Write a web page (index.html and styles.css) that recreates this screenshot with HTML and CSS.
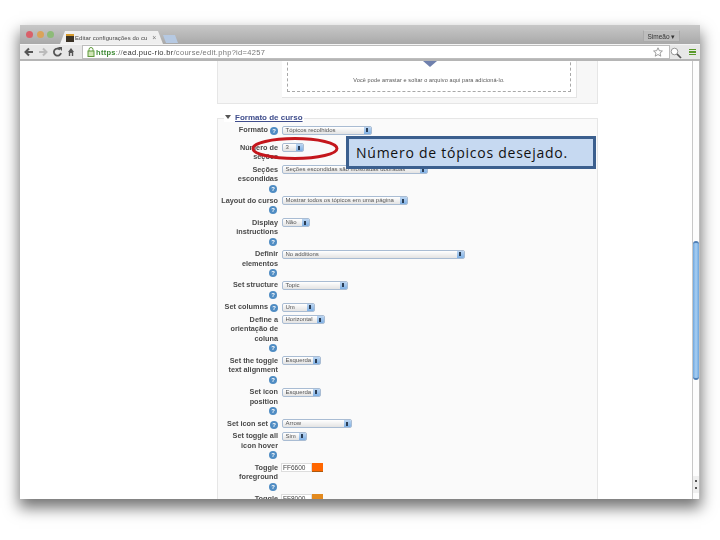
FILE: index.html
```html
<!DOCTYPE html>
<html lang="pt">
<head>
<meta charset="utf-8">
<title>Editar configurações do curso</title>
<link rel="stylesheet" href="styles.css">
</head>
<body>
<div class="window">
  <div class="tabstrip">
    <div class="lights"><i class="light red"></i><i class="light amber"></i><i class="light green"></i></div>
    <div class="tab"><span class="favicon"></span><span class="tab-title">Editar configurações do cu</span><span class="tab-x">×</span></div>
    <div class="newtab"></div>
    <div class="user">Simeão ▾</div>
  </div>
  <div class="toolbar">
    <svg class="nav" width="60" height="14" viewBox="0 0 60 14">
      <path d="M11 7H4M7 3.500 3.500 7 7 10.500" fill="none" stroke="#555" stroke-width="2"/>
      <path d="M17 7h7M21 3.500 24.500 7 21 10.500" fill="none" stroke="#bbb" stroke-width="2"/>
      <path d="M38 4.500A3.600 3.600 0 1 0 39 8" fill="none" stroke="#555" stroke-width="1.800"/>
      <path d="M36 2h4v4z" fill="#555"/>
      <path d="M46 7l3-4 3 4h-.8v4h-1.400V8h-1.600v3h-1.400V7z" fill="#555"/>
    </svg>
    <div class="omnibox">
      <svg class="lock" width="8" height="10" viewBox="0 0 8 10"><rect x="1" y="4" width="6" height="5.500" fill="#cfe5b5" stroke="#5f9a3c"/><path d="M2 4V2.500a2 2 0 0 1 4 0V4" fill="none" stroke="#5f9a3c"/></svg>
      <span class="url"><b class="https">https</b><span class="scheme">://</span>ead.puc-rio.br<span class="path">/course/edit.php?id=4257</span></span>
      <svg class="star" width="10" height="10" viewBox="0 0 10 10"><path d="M5 .8 6.300 3.700 9.400 4 7 6.100 7.800 9.200 5 7.500 2.200 9.200 3 6.100.6 4 3.700 3.700z" fill="#fff" stroke="#888" stroke-width=".8"/></svg>
    </div>
    <svg class="search" width="12" height="12" viewBox="0 0 12 12"><circle cx="4.500" cy="4.500" r="3.300" fill="#fff" stroke="#999"/><path d="M7 7l4 4" stroke="#555" stroke-width="1.700"/></svg>
    <div class="menu"><i></i><i></i><i></i></div>
  </div>
  <div class="viewport">
    <div class="page">
      <div class="filebox">
        <div class="dropzone">
          <svg class="droparrow" width="14" height="6" viewBox="0 0 14 6"><path d="M0 0h14L7 6z" fill="#6f80ad"/></svg>
          <p class="droptext">Você pode arrastar e soltar o arquivo aqui para adicioná-lo.</p>
        </div>
      </div>
      <div class="fieldset">
        <div class="legend"><svg width="6" height="4" viewBox="0 0 6 4"><path d="M0 0h6L3 4z" fill="#555"/></svg><a class="legend-link">Formato de curso</a></div>
        <div class="row first"><div class="label">Formato <span class="help">?</span></div><span class="sel w90"><span class="sel-text">Tópicos recolhidos</span><span class="sel-arrow"></span></span></div>
        <div class="row"><div class="label">Número de seções</div><span class="sel w22"><span class="sel-text">3</span><span class="sel-arrow"></span></span></div>
        <div class="row"><div class="label">Seções escondidas <span class="help below">?</span></div><span class="sel w146"><span class="sel-text">Seções escondidas são mostradas dobradas</span><span class="sel-arrow"></span></span></div>
        <div class="row"><div class="label">Layout do curso <span class="help below">?</span></div><span class="sel w126"><span class="sel-text">Mostrar todos os tópicos em uma página</span><span class="sel-arrow"></span></span></div>
        <div class="row"><div class="label">Display instructions <span class="help below">?</span></div><span class="sel w28"><span class="sel-text">Não</span><span class="sel-arrow"></span></span></div>
        <div class="row"><div class="label">Definir elementos <span class="help below">?</span></div><span class="sel w183"><span class="sel-text">No additions</span><span class="sel-arrow"></span></span></div>
        <div class="row"><div class="label">Set structure <span class="help below">?</span></div><span class="sel w66"><span class="sel-text">Topic</span><span class="sel-arrow"></span></span></div>
        <div class="row"><div class="label">Set columns <span class="help">?</span></div><span class="sel w33"><span class="sel-text">Um</span><span class="sel-arrow"></span></span></div>
        <div class="row"><div class="label">Define a orientação de coluna <span class="help below">?</span></div><span class="sel w43"><span class="sel-text">Horizontal</span><span class="sel-arrow"></span></span></div>
        <div class="row"><div class="label">Set the toggle text alignment <span class="help below">?</span></div><span class="sel w39"><span class="sel-text">Esquerda</span><span class="sel-arrow"></span></span></div>
        <div class="row"><div class="label">Set icon position <span class="help below">?</span></div><span class="sel w39"><span class="sel-text">Esquerda</span><span class="sel-arrow"></span></span></div>
        <div class="row"><div class="label">Set icon set <span class="help">?</span></div><span class="sel w70"><span class="sel-text">Arrow</span><span class="sel-arrow"></span></span></div>
        <div class="row"><div class="label">Set toggle all icon hover <span class="help below">?</span></div><span class="sel w25"><span class="sel-text">Sim</span><span class="sel-arrow"></span></span></div>
        <div class="row"><div class="label">Toggle foreground <span class="help below">?</span></div><span class="colorfield"><span class="hex">FF6600</span><span class="swatch fg"></span></span></div>
        <div class="row"><div class="label">Toggle</div><span class="colorfield"><span class="hex">FF8000</span><span class="swatch bg"></span></span></div>
      </div>
    </div>
    <div class="scrollbar">
      <div class="thumb"></div>
      <div class="arrows"><i></i><i></i></div>
    </div>
  </div>
</div>
<svg class="ring" width="90" height="26" viewBox="0 0 90 26"><ellipse cx="45" cy="12.500" rx="42" ry="10" fill="none" stroke="#c4161c" stroke-width="3"/></svg>
<div class="callout">Número de tópicos desejado.</div>
</body>
</html>
```
FILE: styles.css
```css
* { box-sizing: border-box; }
html, body { margin: 0; padding: 0; height: 540px; overflow: hidden; background: #fff; }
body { position: relative; font-family: "Liberation Sans", Arial, sans-serif; }

.window {
  position: relative;
  margin: 25px 0 0 20px;
  width: 680px;
  height: 474px;
  display: flex;
  flex-direction: column;
  overflow: hidden;
  background: #fff;
  filter: blur(.45px);
}
body::before {
  content: "";
  position: absolute;
  left: 20px; top: 25px;
  width: 680px; height: 474px;
  box-shadow: 0 8px 14px 1px rgba(0,0,0,.55);
}

.tabstrip {
  height: 19px;
  flex: none;
  display: flex;
  align-items: flex-end;
  background: linear-gradient(#c8c8c8, #a9a9a9);
  padding-left: 6px;
}
.lights { display: flex; gap: 3.500px; align-self: flex-start; margin-top: 6px; }
.light { width: 7px; height: 7px; border-radius: 50%; display: block; }
.red { background: #d9606a; }
.amber { background: #dba35a; }
.green { background: #8dbb78; }

.tab {
  margin-left: 6px;
  width: 103px;
  height: 13px;
  display: flex;
  align-items: center;
  padding-left: 6px;
  background: #efefef;
  clip-path: polygon(0 100%, 5px 0, 98px 0, 100% 100%);
  font-size: 5.900px;
  letter-spacing: .1px;
  color: #444;
}
.favicon { width: 8px; height: 8px; background: #3a3226; border-top: 2px solid #d69a2d; flex: none; margin-right: 1px; }
.tab-title { white-space: nowrap; }
.tab-x { margin-left: 5px; color: #777; font-size: 7px; }
.newtab {
  width: 15px; height: 8px; margin-bottom: 1px;
  background: #b6c9e2;
  clip-path: polygon(0 0, 80% 0, 100% 100%, 20% 100%);
}
.user {
  margin-left: auto;
  margin-right: 20px;
  align-self: flex-start;
  margin-top: 5px;
  width: 37px; height: 12px;
  line-height: 12px;
  text-align: center;
  font-size: 6.500px;
  color: #333;
  background: #bdbdbd;
  border: 1px solid #aaa;
  border-top-color: #c8c8c8;
}

.toolbar {
  height: 17px;
  flex: none;
  display: flex;
  align-items: center;
  background: #e7e7e7;
  border-top: 1px solid #f4f4f4;
  border-bottom: 2px solid #b5b5b5;
}
.nav { flex: none; margin-left: 2px; width: 60px; }
.omnibox {
  width: 588px;
  height: 14px;
  flex: none;
  display: flex;
  align-items: center;
  background: #fff;
  border: 1px solid #bdbdbd;
  padding: 0 6px 0 4px;
}
.lock { flex: none; }
.url { margin-left: 1px; font-size: 7.500px; color: #333; letter-spacing: .3px; white-space: nowrap; }
.https { color: #3e8a35; font-weight: bold; }
.scheme, .path { color: #777; }
.star { margin-left: auto; }
.search { flex: none; margin-top: 1px; }
.menu { margin-left: 7px; width: 7px; display: flex; flex-direction: column; gap: 1.400px; }
.menu i { display: block; height: 1.300px; background: #5a9a2a; }

.viewport { flex: 1; min-height: 0; display: flex; overflow: hidden; }
.page { flex: 1; min-width: 0; overflow: hidden; padding-left: 197px; }

.filebox {
  width: 381px;
  height: 43px;
  background: #f7f7f7;
  border: 1px solid #e6e6e6;
  border-top: 0;
  padding-left: 64px;
}
.dropzone {
  position: relative;
  width: 295px;
  height: 37px;
  background: #fff;
  border-bottom: 1px solid #e4e4e4;
  border-right: 1px solid #e4e4e4;
  display: flex;
  flex-direction: column;
  align-items: center;
  padding-left: 5px;
  padding-right: 5px;
}
.dropzone::after {
  content: "";
  position: absolute;
  left: 5px; right: 5px; top: -4px; bottom: 5px;
  border: 1px dashed #a8a8a8;
}
.droparrow { margin-right: -1px; flex: none; }
.droptext { margin: 10px 0 0; font-size: 5.500px; color: #555; white-space: nowrap; letter-spacing: .12px; }

.fieldset {
  margin-top: 14px;
  width: 381px;
  height: 400px;
  background: #fafafa;
  border: 1px solid #e6e6e6;
  border-bottom: 0;
  padding-top: 6px;
}
.legend {
  position: absolute;
  top: 87px;
  left: 204px;
  padding: 0 1px;
  height: 10px;
  display: flex;
  align-items: center;
  gap: 4px;
  background: #fff;
  font-size: 8px;
  font-weight: bold;
}
.legend-link { color: #3f4d8c; text-decoration: underline; }

.row {
  display: flex;
  align-items: flex-start;
  margin-bottom: 2.600px;
}
.row.first { margin-bottom: 7.800px; }
.label {
  width: 58px;
  margin-left: 2px;
  margin-right: 3.500px;
  text-align: right;
  font-size: 7.300px;
  font-weight: bold;
  line-height: 9.600px;
  color: #4a4a4a;
  flex: none;
}
.help {
  display: inline-block;
  width: 8px; height: 8px;
  border-radius: 50%;
  background: #4f8cc3;
  color: #fff;
  font-size: 6px;
  font-weight: bold;
  line-height: 8px;
  text-align: center;
  vertical-align: -1px;
}
.help.below { display: block; margin: .8px 1px .8px auto; }

.sel {
  height: 9px;
  display: flex;
  flex: none;
  border: 1px solid #a9bcd3;
  border-radius: 2px;
  background: linear-gradient(#fff, #e3e3e3);
  overflow: hidden;
  margin-top: .5px;
}
.sel-text {
  flex: 1;
  min-width: 0;
  padding-left: 3px;
  font-size: 6px;
  line-height: 7px;
  color: #555;
  white-space: nowrap;
  overflow: hidden;
}
.sel-arrow {
  flex: none;
  width: 7px;
  position: relative;
  background: linear-gradient(#bcd6f2, #7fb0e4);
}
.sel-arrow::after {
  content: "";
  position: absolute;
  left: 2.500px; top: 1.500px;
  width: 2px; height: 4px;
  background: #2a3d55;
}
.w22 { width: 22px; } .w25 { width: 25px; } .w28 { width: 28px; }
.w33 { width: 33px; } .w39 { width: 39px; } .w43 { width: 43px; }
.w66 { width: 66px; } .w70 { width: 70px; } .w90 { width: 90px; }
.w126 { width: 126px; } .w146 { width: 146px; } .w183 { width: 183px; }

.colorfield { display: flex; flex: none; height: 9px; margin-left: -.5px; }
.hex {
  width: 31px;
  background: #fff;
  border: 1px solid #ddd;
  padding-left: 1px;
  font-size: 6.500px;
  line-height: 8px;
  color: #444;
}
.swatch { width: 11px; border-bottom: 1px solid #aa5a10; }
.fg { background: #ff6600; }
.bg { background: #e38a1e; }

.scrollbar {
  width: 8px;
  flex: none;
  display: flex;
  flex-direction: column;
  background: #fdfdfd;
  border-left: 1px solid #c8c8c8;
  border-right: 1px solid #bdbdbd;
  padding-top: 180px;
}
.thumb {
  height: 139px;
  flex: none;
  background: linear-gradient(90deg, #6fa7de, #a8cff3 50%, #6fa7de);
  border-radius: 3px;
  border-top: 2px solid #4f7fb5;
  border-bottom: 2px solid #4f7fb5;
}
.arrows {
  margin-top: 96px;
  height: 17px;
  flex: none;
  background: #efefef;
  display: flex;
  flex-direction: column;
  align-items: center;
  justify-content: center;
  gap: 5px;
}
.arrows i { display: block; width: 2px; height: 2px; background: #555; }

.ring { position: absolute; left: 250px; top: 136px; }
.callout {
  position: absolute;
  left: 346px; top: 136px;
  width: 250px; height: 33px;
  padding-left: 7px;
  background: #c6d9f1;
  border: 3px solid #3b5f8e;
  font-family: "Open Sans", "Noto Sans", sans-serif;
  font-size: 14px;
  line-height: 27px;
  letter-spacing: .75px;
  color: #111;
  white-space: nowrap;
}
```
